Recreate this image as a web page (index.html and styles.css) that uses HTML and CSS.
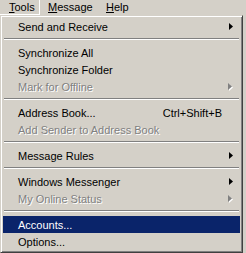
FILE: index.html
```html
<!DOCTYPE html>
<html>
<head>
<meta charset="utf-8">
<link rel="stylesheet" href="styles.css">
</head>
<body>
<div class="menubar">
  <div class="mb-item pressed"><u>T</u>ools</div>
  <div class="mb-item msg"><u>M</u>essage</div>
  <div class="mb-item"><u>H</u>elp</div>
</div>
<div class="menu">
  <div class="item"><span class="label">Send and Receive</span><svg class="arrow" width="4" height="7" viewBox="0 0 4 7"><polygon points="0,0 4,3.5 0,7" fill="#000"/></svg></div>
  <div class="sep"></div>
  <div class="item"><span class="label">Synchronize All</span></div>
  <div class="item"><span class="label">Synchronize Folder</span></div>
  <div class="item disabled"><span class="label">Mark for Offline</span><svg class="arrow" width="5" height="8" viewBox="0 0 5 8"><polygon points="1,1 5,4.5 1,8" fill="#fff"/><polygon points="0,0 4,3.5 0,7" fill="#808080"/></svg></div>
  <div class="sep"></div>
  <div class="item"><span class="label">Address Book...</span><span class="shortcut">Ctrl+Shift+B</span></div>
  <div class="item disabled"><span class="label">Add Sender to Address Book</span></div>
  <div class="sep"></div>
  <div class="item"><span class="label">Message Rules</span><svg class="arrow" width="4" height="7" viewBox="0 0 4 7"><polygon points="0,0 4,3.5 0,7" fill="#000"/></svg></div>
  <div class="sep"></div>
  <div class="item"><span class="label">Windows Messenger</span><svg class="arrow" width="4" height="7" viewBox="0 0 4 7"><polygon points="0,0 4,3.5 0,7" fill="#000"/></svg></div>
  <div class="item disabled"><span class="label">My Online Status</span><svg class="arrow" width="5" height="8" viewBox="0 0 5 8"><polygon points="1,1 5,4.5 1,8" fill="#fff"/><polygon points="0,0 4,3.5 0,7" fill="#808080"/></svg></div>
  <div class="sep"></div>
  <div class="item active"><span class="label">Accounts...</span></div>
  <div class="item"><span class="label">Options...</span></div>
</div>
</body>
</html>
```

FILE: styles.css
```css
html, body {
  margin: 0;
  padding: 0;
  background: #d4d0c8;
  width: 246px;
  height: 253px;
  overflow: hidden;
}
body {
  font-family: "Liberation Sans", Arial, sans-serif;
  font-size: 11px;
  color: #000;
}
.menubar {
  display: flex;
  height: 15px;
  background: #d4d0c8;
}
.mb-item {
  height: 15px;
  line-height: 14px;
  padding: 0 0 0 8px;
  box-sizing: border-box;
}
.mb-item u { text-decoration: underline; text-underline-offset: 1px; }
.pressed {
  width: 40px;
  padding-left: 9px;
  border-right: 1px solid #fff;
  border-bottom: 1px solid #fff;
}
.msg { width: 58px; }
.menu {
  width: 243px;
  box-sizing: border-box;
  border-top: 1px solid #d4d0c8;
  border-left: 1px solid #d4d0c8;
  border-right: 1px solid #404040;
  border-bottom: 1px solid #404040;
  background: #d4d0c8;
  box-shadow: inset 1px 1px 0 #fff, inset -1px -1px 0 #808080;
  padding: 2px 2px;
}
.item {
  height: 17px;
  display: flex;
  align-items: center;
  padding: 0 5px 0 15px;
  white-space: nowrap;
}
.label { flex: 1; }
.shortcut { margin-right: 13px; }
.arrow { margin-right: 2px; }
.disabled { color: #808080; text-shadow: 1px 1px 0 #fff; }
.active { background: #0a246a; color: #fff; }
.sep {
  height: 9px;
  box-sizing: border-box;
  padding-top: 3px;
  margin: 0 1px;
}
.sep::before {
  content: "";
  display: block;
  height: 1px;
  background: #808080;
  border-bottom: 1px solid #fff;
}
```
